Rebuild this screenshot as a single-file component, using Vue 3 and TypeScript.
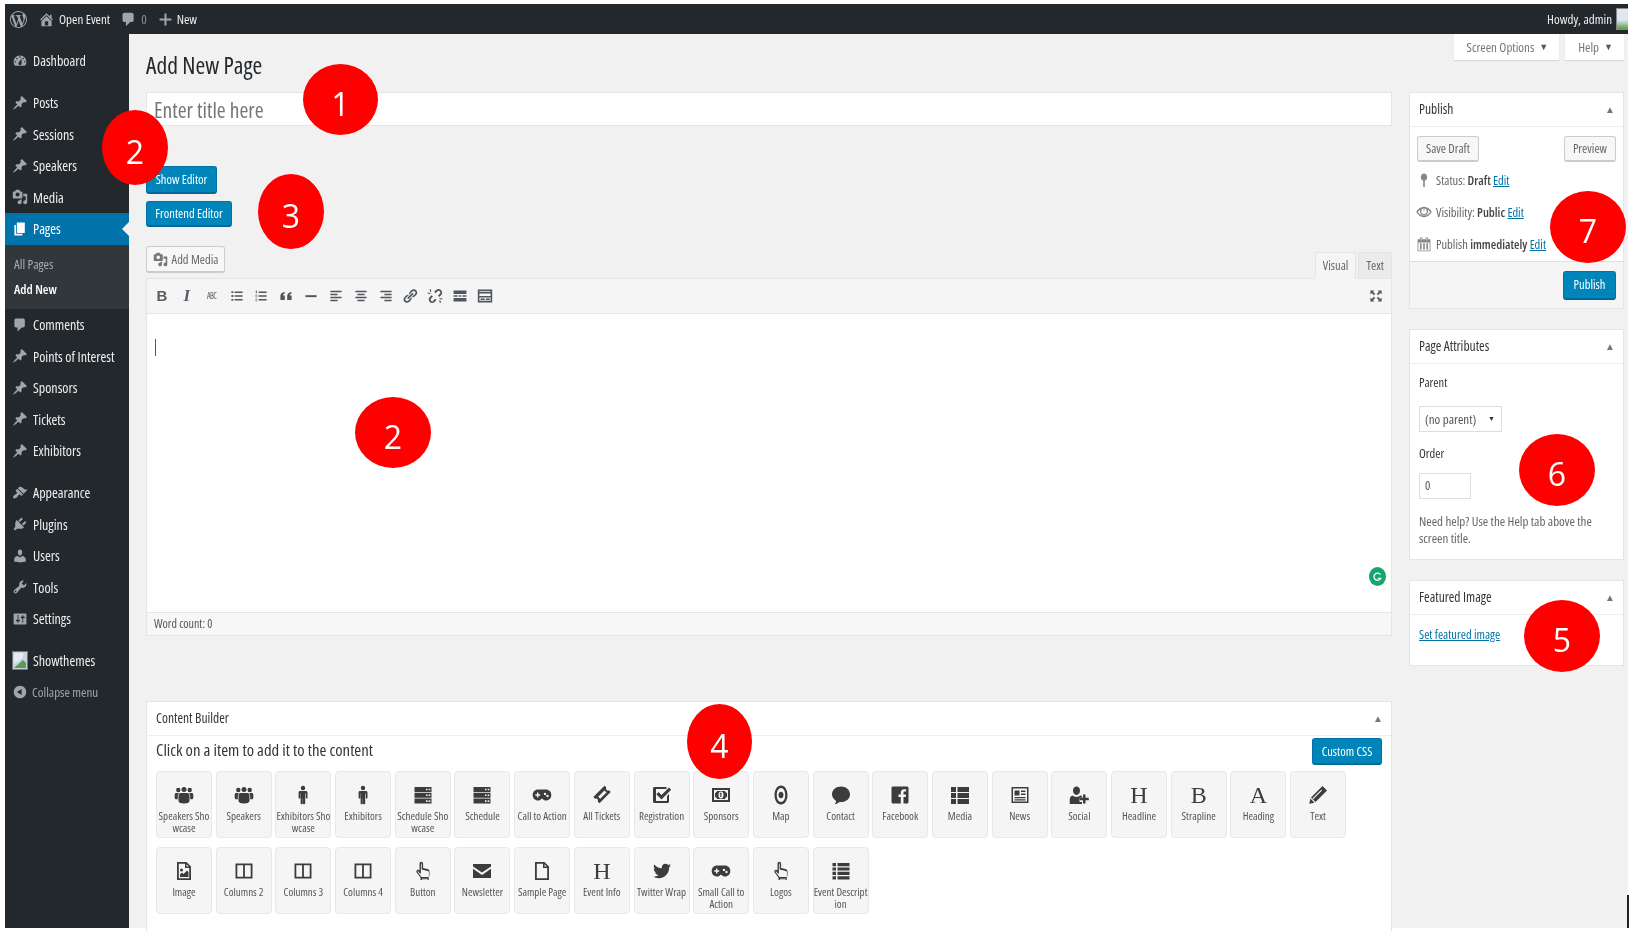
<script setup lang="ts">
type Item = { label: string; icon: string }

const icons: Record<string, string> = {
  dashboard: 'M3.76 16h12.48c1.1-1.37 1.76-3.11 1.76-5 0-4.42-3.58-8-8-8s-8 3.58-8 8c0 1.89.66 3.63 1.76 5zM10 4c.55 0 1 .45 1 1s-.45 1-1 1-1-.45-1-1 .45-1 1-1zM6 6c.55 0 1 .45 1 1s-.45 1-1 1-1-.45-1-1 .45-1 1-1zm8 0c.55 0 1 .45 1 1s-.45 1-1 1-1-.45-1-1 .45-1 1-1zm-5.37 5.55L12 7v6c0 1.1-.9 2-2 2s-2-.9-2-2c0-.57.24-1.08.63-1.45zM4 10c.55 0 1 .45 1 1s-.45 1-1 1-1-.45-1-1 .45-1 1-1zm12 0c.55 0 1 .45 1 1s-.45 1-1 1-1-.45-1-1 .45-1 1-1z',
  pin: 'M10.44 3.02l1.82-1.82 6.36 6.35-1.83 1.82c-1.05-.68-2.48-.57-3.41.36l-.75.75c-.92.93-1.04 2.35-.35 3.41l-1.83 1.82-2.41-2.41-2.8 2.79c-.42.42-3.38 2.71-3.8 2.29s1.86-3.39 2.28-3.81l2.79-2.79L4.1 9.36l1.83-1.82c1.05.69 2.48.57 3.4-.36l.75-.75c.93-.92 1.05-2.35.36-3.41z',
  media: 'M13 11V4c0-.55-.45-1-1-1h-1.67L9 1H5L3.67 3H2c-.55 0-1 .45-1 1v7c0 .55.45 1 1 1h10c.55 0 1-.45 1-1zM7 4.5c1.38 0 2.5 1.12 2.5 2.5S8.38 9.5 7 9.5 4.5 8.38 4.5 7 5.62 4.5 7 4.5zM14 6h5v10.5c0 1.38-1.12 2.5-2.5 2.5S14 17.88 14 16.5s1.12-2.5 2.5-2.5c.17 0 .34.02.5.05V9h-3V6zm-4 8.05V13h2v3.5c0 1.38-1.12 2.5-2.5 2.5S7 17.88 7 16.5 8.12 14 9.5 14c.17 0 .34.02.5.05z',
  pages: 'M6 15V2h10v13H6zm-1 1h8v2H3V5h2v11z',
  comment: 'M5 2h9c1.1 0 2 .9 2 2v7c0 1.1-.9 2-2 2h-2l-5 5v-5H5c-1.1 0-2-.9-2-2V4c0-1.1.9-2 2-2z',
  appearance: 'M14.48 11.06L7.41 3.99l1.5-1.5c.5-.56 2.3-.47 3.51.32 1.21.8 1.43 1.28 2.91 2.1 1.18.64 2.45 1.26 4.45.85zm-.71.71L6.7 4.7 4.93 6.47c-.39.39-.39 1.02 0 1.41l1.06 1.06c.39.39.39 1.03 0 1.42-.6.6-1.43 1.11-2.21 1.69-.35.26-.7.53-1.01.84C1.43 13.23.76 14.91 1.95 16.1c1.2 1.2 2.88.53 4.22-.81.31-.31.58-.66.85-1.02.57-.78 1.08-1.6 1.69-2.21.39-.39 1.02-.39 1.41 0l1.06 1.06c.39.39 1.02.39 1.41 0z',
  plugins: 'M13.11 4.36L9.87 7.6 8 5.73l3.24-3.24c.35-.34 1.05-.2 1.56.32.52.51.66 1.21.31 1.55zm-8 1.77l.91-1.12 9.01 9.01-1.19.84c-.71.71-2.63 1.16-3.82 1.16H6.14L4.9 17.26c-.59.59-1.54.59-2.12 0-.59-.58-.59-1.53 0-2.12l1.24-1.24v-3.88c0-1.13.4-3.19 1.09-3.89zm7.26 3.97l3.24-3.24c.34-.35 1.04-.21 1.55.31.52.51.66 1.21.31 1.55l-3.24 3.25z',
  users: 'M10 9.25c-2.27 0-2.73-3.44-2.73-3.44C7 4.02 7.82 2 9.97 2c2.16 0 2.98 2.02 2.71 3.81 0 0-.41 3.44-2.68 3.44zm0 2.57L12.72 10c2.39 0 4.52 2.33 4.52 4.53v2.49s-3.65 1.13-7.24 1.13c-3.65 0-7.24-1.13-7.24-1.13v-2.49c0-2.25 1.94-4.48 4.47-4.48z',
  tools: 'M16.68 9.77c-1.34 1.34-3.3 1.67-4.95.99l-5.41 6.52c-.99.99-2.59.99-3.58 0s-.99-2.59 0-3.57l6.52-5.42c-.68-1.65-.35-3.61.99-4.95 1.28-1.28 3.12-1.62 4.72-1.06l-2.89 2.89 2.82 2.82 2.86-2.87c.53 1.58.18 3.39-1.08 4.65zM3.81 16.21c.4.39 1.04.39 1.43 0 .4-.4.4-1.04 0-1.43-.39-.4-1.03-.4-1.43 0-.39.39-.39 1.03 0 1.43z',
  settings: 'M18 16V4c0-.55-.45-1-1-1H3c-.55 0-1 .45-1 1v12c0 .55.45 1 1 1h14c.55 0 1-.45 1-1zM8 11h1c.55 0 1 .45 1 1s-.45 1-1 1H8v1.5c0 .28-.22.5-.5.5s-.5-.22-.5-.5V13H6c-.55 0-1-.45-1-1s.45-1 1-1h1V5.5c0-.28.22-.5.5-.5s.5.22.5.5V11zm5-2h-1c-.55 0-1-.45-1-1s.45-1 1-1h1V5.5c0-.28.22-.5.5-.5s.5.22.5.5V7h1c.55 0 1 .45 1 1s-.45 1-1 1h-1v5.5c0 .28-.22.5-.5.5s-.5-.22-.5-.5V9z',
  collapse: 'M10 2.16c4.33 0 7.84 3.51 7.84 7.84s-3.51 7.84-7.84 7.84S2.16 14.33 2.16 10 5.71 2.16 10 2.16zm2 11.72V6.12L6.18 9.97z',
  home: 'M16 8.5l1.53 1.53-1.06 1.06L10 4.62l-6.47 6.47-1.06-1.06L10 2.5l4 4v-2h2v4zm-6-2.46l6 5.99V18H4v-5.97zM12 17v-5H8v5h4z',
  plus: 'M8.8 3h2.4v5.8H17v2.4h-5.8V17H8.8v-5.8H3V8.8h5.8z',
  wp: 'M20 10c0-5.51-4.49-10-10-10C4.48 0 0 4.49 0 10c0 5.52 4.48 10 10 10 5.51 0 10-4.48 10-10zM7.78 15.37L4.37 6.22c.55-.02 1.17-.08 1.17-.08.5-.06.44-1.13-.06-1.11 0 0-1.45.11-2.37.11-.18 0-.37 0-.58-.01C4.12 2.69 6.87 1.11 10 1.11c2.33 0 4.45.87 6.05 2.34-.68-.11-1.65.39-1.65 1.58 0 .74.45 1.36.9 2.1.35.61.55 1.36.55 2.46 0 1.49-1.4 5-1.4 5l-3.03-8.37c.54-.02.82-.17.82-.17.5-.05.44-1.25-.06-1.22 0 0-1.44.12-2.38.12-.87 0-2.33-.12-2.33-.12-.5-.03-.56 1.2-.06 1.22l.92.08 1.26 3.41zM17.41 10c.24-.64.74-1.87.43-4.25.7 1.29 1.05 2.71 1.05 4.25 0 3.29-1.73 6.24-4.4 7.78.97-2.59 1.94-5.2 2.92-7.78zM6.1 18.09C3.12 16.65 1.11 13.53 1.11 10c0-1.3.23-2.48.72-3.59C3.25 10.3 4.67 14.2 6.1 18.09zm4.03-6.63l2.58 6.98c-.86.29-1.76.45-2.71.45-.79 0-1.57-.11-2.29-.33.81-2.38 1.62-4.74 2.42-7.1z',
  status: 'M14 6.5c0 2-1.4 3.7-3 4.2V18l-1 1.5L9 18v-7.3c-1.6-.5-3-2.2-3-4.2C6 4 7.8 2 10 2s4 2 4 4.5z',
  eye: 'M10 3.5c4.2 0 7.6 2.7 9.7 6.5-2.1 3.8-5.5 6.5-9.7 6.5S2.4 13.800.3 10C2.4 6.200 5.8 3.5 10 3.5zM10 5.5a3.5 3.5 0 1 0 0 7 3.5 3.5 0 0 0 0-7zM10 6.5a1 1 0 1 1 0 2 1 1 0 0 1 0-2zM5.2 7.2C4 8 3 9 2.3 10c1.8 2.7 4.6 4.7 7.7 4.7s5.900-2 7.700-4.700c-.7-1-1.700-2-2.900-2.800.3.6.4 1.200.4 1.800a5.200 5.200 0 0 1-10.400 0c0-.6.1-1.200.4-1.800z',
  calendar: 'M15 4h3v15H2V4h3V3c0-.8.7-1.5 1.5-1.5S8 2.2 8 3v1h4V3c0-.8.7-1.5 1.5-1.5S15 2.2 15 3zM6.5 2.5c-.3 0-.5.2-.5.5v2c0 .3.2.5.5.5S7 5.3 7 5V3c0-.3-.2-.5-.5-.5zm7 0c-.3 0-.5.2-.5.5v2c0 .3.2.5.5.5s.5-.2.5-.5V3c0-.3-.2-.5-.5-.5zM17 18V8H3v10zM5 9h2v8H5zM9 9h2v8H9zM13 9h2v8h-2z',
  // editor toolbar
  bullist: 'M3 4h2.400v2.400H3zM7 4.300h10v1.800H7zM3 8.800h2.400v2.400H3zM7 9.100h10v1.800H7zM3 13.600h2.400V16H3zM7 13.900h10v1.800H7z',
  numlist: 'M3.500 3h1.200v3.500H3.500zM7 4.300h10v1.800H7zM3 8.500h2.200v1H3zM3 10.500h2.200v1H3zM7 9.100h10v1.800H7zM3 13.500h2.200v1H3zM3 15.500h2.200v1H3zM7 13.900h10v1.800H7z',
  quote: 'M8.500 5v2C7 7.500 6.300 8.500 6.300 9.500H8.500V15H3V10c0-3 2-4.700 5.500-5zM17 5v2c-1.500.5-2.200 1.500-2.200 2.500H17V15h-5.500V10c0-3 2-4.700 5.500-5z',
  hr: 'M3 9h14v2.400H3z',
  alignleft: 'M3 3.500h14v1.800H3zM3 7.200h9V9H3zM3 11h14v1.800H3zM3 14.700h9v1.800H3z',
  aligncenter: 'M3 3.500h14v1.800H3zM5.500 7.200h9V9h-9zM3 11h14v1.800H3zM5.500 14.700h9v1.800h-9z',
  alignright: 'M3 3.500h14v1.800H3zM8 7.200h9V9H8zM3 11h14v1.800H3zM8 14.700h9v1.800H8z',
  link: 'M17.740 2.760c1.680 1.690 1.680 4.410 0 6.100l-1.530 1.520c-1.120 1.120-2.700 1.490-4.130 1.130l2.620-2.620.76-.77.760-.76c.84-.84.840-2.200 0-3.040-.84-.850-2.200-.850-3.040 0l-.77.760-3.380 3.380c-.37-1.430 0-3.010 1.120-4.130l1.520-1.530c1.690-1.680 4.410-1.680 6.070-.04zM8.590 13.430l5.340-5.340c.42-.420.420-1.100 0-1.520-.44-.430-1.130-.390-1.520 0l-5.340 5.340c-.420.420-.420 1.100 0 1.520.44.430 1.130.390 1.520 0zm-.76 2.290l4.140-4.140c.38 1.430 0 3.020-1.120 4.140l-1.530 1.520c-1.680 1.680-4.410 1.680-6.090 0-1.680-1.680-1.680-4.410 0-6.090l1.530-1.530c1.120-1.120 2.710-1.500 4.140-1.120l-4.140 4.140c-.84.84-.84 2.200 0 3.040.84.840 2.200.840 3.040 0z',
  unlink: 'M17.740 2.760c1.680 1.690 1.680 4.410 0 6.100l-2.300 2.300-1.700-1.700 2.300-2.300c.84-.84.840-2.200 0-3.040-.84-.850-2.200-.850-3.040 0l-2.300 2.300-1.700-1.700 2.300-2.300c1.690-1.680 4.410-1.680 6.440.34zM7.830 15.720l2.300-2.300 1.700 1.700-2.300 2.300c-1.680 1.680-4.410 1.680-6.090 0-1.680-1.680-1.680-4.410 0-6.090l2.300-2.300 1.700 1.700-2.300 2.300c-.84.84-.84 2.200 0 3.040.84.840 2.200.840 2.690.350zM3.200 1.500l1.300-.3 1 3.300-1.300.4zM1 5.500l3.300.7-.3 1.300L.7 6.800zM15.200 15.500l1.300-.4 1 3.300-1.300.3zM15.800 12.500l3.500.7-.3 1.300-3.500-.7z',
  more: 'M2 3h16v4.500H2zM2 9.200h5v1.800H2zM8.500 9.200h3v1.800h-3zM13 9.200h5v1.800h-5zM2 12.500h16V17H2z',
  kitchen: 'M1 2h18v16H1zM3 4v1h14V4zM3 7v3h14V7zM3 12v4h14v-4zM4.500 13h5v2h-5zM11 13h5v2h-5z',
  expand: 'M3 3h5L6.300 4.700 9 7.400 7.400 9 4.700 6.300 3 8zM17 3v5l-1.700-1.700L12.600 9 11 7.400l2.700-2.700L12 3zM3 17v-5l1.700 1.700L7.400 11 9 12.600l-2.700 2.700L8 17zM17 17h-5l1.700-1.700L11 12.600l1.600-1.600 2.700 2.700L17 12z',
  // content builder tiles
  group: 'M10 2a2.500 2.500 0 1 1 0 5 2.500 2.500 0 0 1 0-5zM4.300 2.800a2.200 2.200 0 1 1 0 4.400 2.200 2.200 0 0 1 0-4.400zM15.700 2.800a2.200 2.200 0 1 1 0 4.400 2.200 2.200 0 0 1 0-4.400zM6.500 8h7c1.300 0 2 1 2 2.300V16c0 1.700-2.800 2.500-5.500 2.500S4.500 17.700 4.500 16v-5.700C4.500 9 5.200 8 6.500 8zM.7 9.500C.7 8.600 1.400 8 2.300 8H5c-.9.700-1.200 1.800-1.200 2.800v3.500H2.300C1.200 14.300.7 13.400.7 12.500zM19.300 9.500c0-.9-.7-1.500-1.600-1.500H15c.9.700 1.200 1.800 1.200 2.800v3.500h1.500c1.100 0 1.600-.9 1.600-1.800z',
  male: 'M10 .8a2.200 2.200 0 1 1 0 4.400 2.200 2.200 0 0 1 0-4.400zM7.200 6h5.600c1 0 1.700.7 1.700 1.700v5c0 .5-.4.9-.9.9s-.8-.4-.8-.9V8.500h-.6V18.200c0 .6-.5 1.100-1.100 1.100s-1.100-.5-1.100-1.100V13h-.2v5.200c0 .6-.5 1.100-1.100 1.100s-1.100-.5-1.100-1.100V8.500h-.3v4.200c0 .5-.4.9-.8.9s-.9-.4-.9-.9v-5C5.500 6.700 6.200 6 7.200 6z',
  server: 'M1.500 2h17v5h-17zM1.500 7.800h17v5h-17zM1.500 13.600h17v5h-17zM13 3.700v1.600h1.600V3.700zM15.700 3.700v1.600h1.600V3.700zM13 9.500v1.600h1.600V9.500zM15.700 9.500v1.600h1.600V9.500zM13 15.300v1.600h1.600v-1.600zM15.700 15.300v1.600h1.600v-1.600z',
  gamepad: 'M6 4.500h8c3 0 5.300 2.300 5.300 5.500s-2.300 5.500-5.300 5.500c-1.600 0-2.700-.8-3.500-1.800h-1C8.700 14.700 7.600 15.500 6 15.500c-3 0-5.300-2.300-5.300-5.500S3 4.500 6 4.500zM5 7.500v1.800H3.300v1.400H5v1.800h1.400v-1.800h1.800V9.300H6.400V7.500zM13 7.700a1.200 1.200 0 1 0 0 2.400 1.200 1.200 0 0 0 0-2.400zM15.500 9.800a1.200 1.200 0 1 0 0 2.400 1.200 1.200 0 0 0 0-2.400z',
  ticket: 'M12.500 .8l1.800 1.800c-.5.800-.3 1.700.3 2.300.6.600 1.500.8 2.300.3l1.800 1.800L7.500 18.200 5.700 16.400c.5-.8.3-1.700-.3-2.300-.6-.6-1.500-.8-2.300-.3L1.300 12zM12.500 5.500L6.200 11.800 8.200 13.800 14.500 7.500z',
  check: 'M3.500 2H14.500v2H4.500c-.3 0-.5.2-.5.5v11c0 .3.2.5.5.5h10c.3 0 .5-.2.5-.5V11l2-2v7.500c0 .8-.7 1.500-1.500 1.500h-13C1.700 18 1 17.300 1 16.500v-13C1 2.700 1.700 2 2.500 2zM17 2.500l2.200 2.200L9.500 14.500 4.300 9.300l2.200-2.200 3 3z',
  money: 'M1 3h18v14H1zM3 5v10h14V5zM6 6h8c.3 1.200 1 1.800 2 2v4c-1 .2-1.700.8-2 2H6c-.3-1.200-1-1.800-2-2V8c1-.2 1.700-.8 2-2zM10 6.500c-1.800 0-2.500 1.500-2.500 3.500s.7 3.500 2.500 3.500 2.500-1.500 2.500-3.500-.7-3.500-2.500-3.500zM9 7.800h1.500V12H9.300V9l-.6.400z',
  dot: 'M10 .5c3.800 0 6.500 4.200 6.500 9.500s-2.700 9.500-6.500 9.500S3.500 15.300 3.500 10 6.200.5 10 .5zM10 3c-2.600 0-4.200 3-4.200 7s1.600 7 4.200 7 4.200-3 4.200-7-1.600-7-4.200-7zM10 6.800c1.500 0 2.500 1.400 2.500 3.200s-1 3.200-2.500 3.200-2.500-1.400-2.500-3.200 1-3.200 2.500-3.200z',
  bubble: 'M10 1.500c5 0 9 3.200 9 7.800s-4 7.800-9 7.800c-.5 0-1 0-1.500-.1C7 18.200 5.500 19.200 3.500 19.200c1-.9 1.500-2 1.600-3.300C2.600 14.500 1 12 1 9.300 1 4.700 5 1.500 10 1.500z',
  facebook: 'M3 1.500h14c.8 0 1.500.7 1.500 1.500v14c0 .8-.7 1.500-1.500 1.500h-3.500v-6.500h2.200l.4-2.600h-2.600V7.800c0-.8.3-1.200 1.200-1.200h1.400V4.300c-.4-.1-1.200-.1-2-.1-2.200 0-3.300 1.300-3.300 3.500v1.700H8.500V12h2.300v6.500H3c-.8 0-1.500-.7-1.500-1.500V3c0-.8.7-1.500 1.500-1.500z',
  thlist: 'M1 2h5v5H1zM7.500 2h11.500v5H7.500zM1 8h5v5H1zM7.500 8h11.500v5H7.500zM1 14h5v5H1zM7.500 14h11.500v5H7.500z',
  news: 'M1.500 2h17v16h-17zM3 3.500v13h14v-13zM4.500 5.500h5v5h-5zM11 5.500h4.500v1.500H11zM11 8.500h4.500V10H11zM4.500 12h11v1.300h-11zM4.500 14.300h11v1.300h-11z',
  userplus: 'M7.500 1.500c2.200 0 3.500 1.800 3.500 4s-1.300 4.500-3.500 4.500S4 7.700 4 5.500s1.300-4 3.500-4zM3.500 10.500c1 .9 2.500 1.400 4 1.400s3-.5 4-1.400c.5.1 1 .3 1.500.6v1.900h-2.500v4H13V19H.7v-4.500c0-2 1.100-3.500 2.800-4zM14 9.500h2.500v3.300h3.300v2.400h-3.300v3.300H14v-3.300h-3.200v-2.400H14z',
  pencil: 'M14.500 1l4.500 4.500L7.500 17l-4.500-4.500zM2.300 13.500l4.200 4.200-5.200 1.100zM13.200 4.700l-8.700 8.700.8.800 8.700-8.700z',
  fileimage: 'M3 1H12.500L17 5.500V19H3zM4.800 2.800v14.400h10.400V7H11V2.800zM12.500 3.300V5.500h2.200zM7.500 7.500a1.500 1.500 0 1 1 0 3 1.500 1.500 0 0 1 0-3zM6 16v-2.500l2-2 1.500 1.500 3.500-3.500 1.500 1.500v5z',
  columns: 'M1.500 2.500h17v15h-17zM3.300 4.300v11.400h5.800V4.300zM10.900 4.300v11.400h5.800V4.300z',
  hand: 'M8.200.8c1.100 0 1.900.9 1.900 2v4.300l4.300 1c1.400.3 2.100 1.300 2.100 2.700v2.700c0 1-.3 1.900-.8 2.600v3H7.500v-2.500L3.800 11.700c-.8-1-.5-2.200.3-2.700.8-.6 1.900-.4 2.400.2V2.800c0-1.100.7-2 1.700-2zM8.200 2.500c-.2 0-.3.100-.3.300v9.700l-1.100-.1-1.500-2c-.2-.2-.5-.2-.7 0s-.2.4 0 .7l3.900 5h6.900c.3-.5.500-1.200.5-1.900v-2.700c0-.7-.3-1.200-1.100-1.400L8.700 8.600V2.800c0-.2-.3-.3-.5-.3zM8.900 17.800v1h5.800v-1z',
  envelope: 'M1 3h18v2.500L10 11.500 1 5.500zM1 7.800L10 14l9-6.200V17H1z',
  file: 'M3 1H12.500L17 5.500V19H3zM4.800 2.800v14.400h10.400V7H11V2.800zM12.500 3.300V5.500h2.200z',
  twitter: 'M18.940 4.460c-.49.73-1.110 1.380-1.830 1.900.01.15.01.31.01.47 0 4.850-3.690 10.440-10.430 10.440-2.070 0-4-.61-5.630-1.650.29.03.58.05.88.05 1.720 0 3.300-.59 4.550-1.570-1.600-.03-2.950-1.090-3.420-2.550.22.04.45.07.69.07.33 0 .66-.05.96-.13-1.670-.34-2.940-1.820-2.940-3.600v-.04c.5.27 1.060.44 1.660.46-.98-.66-1.630-1.780-1.630-3.060 0-.67.18-1.300.5-1.840 1.810 2.220 4.510 3.680 7.560 3.830-.06-.27-.1-.55-.1-.84 0-2.020 1.650-3.660 3.670-3.660 1.060 0 2.010.44 2.680 1.160.83-.17 1.620-.47 2.330-.89-.28.85-.86 1.570-1.620 2.020.75-.08 1.450-.28 2.110-.57z',
  list: 'M1.500 2h3.500v3.200H1.500zM6.500 2h12v3.200h-12zM1.500 6.400h3.500v3.200H1.500zM6.500 6.400h12v3.200h-12zM1.500 10.800h3.500V14H1.500zM6.500 10.800h12V14h-12zM1.500 15.200h3.500v3.200H1.500zM6.500 15.200h12v3.200h-12z',
}

const menuGroups: Item[][] = [
  [{ label: 'Dashboard', icon: 'dashboard' }],
  [
    { label: 'Posts', icon: 'pin' },
    { label: 'Sessions', icon: 'pin' },
    { label: 'Speakers', icon: 'pin' },
    { label: 'Media', icon: 'media' },
    { label: 'Pages', icon: 'pages' },
    { label: 'Comments', icon: 'comment' },
    { label: 'Points of Interest', icon: 'pin' },
    { label: 'Sponsors', icon: 'pin' },
    { label: 'Tickets', icon: 'pin' },
    { label: 'Exhibitors', icon: 'pin' },
  ],
  [
    { label: 'Appearance', icon: 'appearance' },
    { label: 'Plugins', icon: 'plugins' },
    { label: 'Users', icon: 'users' },
    { label: 'Tools', icon: 'tools' },
    { label: 'Settings', icon: 'settings' },
  ],
  [
    { label: 'Showthemes', icon: 'theme' },
    { label: 'Collapse menu', icon: 'collapse' },
  ],
]

const toolbar = ['bullist', 'numlist', 'quote', 'hr', 'alignleft', 'aligncenter', 'alignright', 'link', 'unlink', 'more', 'kitchen']

// glyph tiles (H, B, A) are serif letters in the original icon font
const tiles: { label: string; icon?: string; glyph?: string }[] = [
  { label: 'Speakers Sho\nwcase', icon: 'group' },
  { label: 'Speakers', icon: 'group' },
  { label: 'Exhibitors Sho\nwcase', icon: 'male' },
  { label: 'Exhibitors', icon: 'male' },
  { label: 'Schedule Sho\nwcase', icon: 'server' },
  { label: 'Schedule', icon: 'server' },
  { label: 'Call to Action', icon: 'gamepad' },
  { label: 'All Tickets', icon: 'ticket' },
  { label: 'Registration', icon: 'check' },
  { label: 'Sponsors', icon: 'money' },
  { label: 'Map', icon: 'dot' },
  { label: 'Contact', icon: 'bubble' },
  { label: 'Facebook', icon: 'facebook' },
  { label: 'Media', icon: 'thlist' },
  { label: 'News', icon: 'news' },
  { label: 'Social', icon: 'userplus' },
  { label: 'Headline', glyph: 'H' },
  { label: 'Strapline', glyph: 'B' },
  { label: 'Heading', glyph: 'A' },
  { label: 'Text', icon: 'pencil' },
  { label: 'Image', icon: 'fileimage' },
  { label: 'Columns 2', icon: 'columns' },
  { label: 'Columns 3', icon: 'columns' },
  { label: 'Columns 4', icon: 'columns' },
  { label: 'Button', icon: 'hand' },
  { label: 'Newsletter', icon: 'envelope' },
  { label: 'Sample Page', icon: 'file' },
  { label: 'Event Info', glyph: 'H' },
  { label: 'Twitter Wrap', icon: 'twitter' },
  { label: 'Small Call to\nAction', icon: 'gamepad' },
  { label: 'Logos', icon: 'hand' },
  { label: 'Event Descript\nion', icon: 'list' },
]

const markers = [
  { n: 1, x: 303, y: 64, w: 75, h: 71 },
  { n: 2, x: 102, y: 110, w: 66, h: 75 },
  { n: 3, x: 258, y: 174, w: 66, h: 75 },
  { n: 2, x: 355, y: 397, w: 76, h: 71 },
  { n: 4, x: 687, y: 704, w: 65, h: 75 },
  { n: 5, x: 1524, y: 600, w: 76, h: 72 },
  { n: 6, x: 1519, y: 434, w: 76, h: 72 },
  { n: 7, x: 1550, y: 191, w: 76, h: 72 },
]
</script>

<template>
  <div class="shot">
    <header class="topbar">
      <svg class="wp-logo" viewBox="0 0 20 20"><path :d="icons.wp" fill-rule="evenodd" /></svg>
      <svg class="bar-icon" viewBox="0 0 20 20"><path :d="icons.home" fill-rule="evenodd" /></svg>
      <span class="bar-text">Open Event</span>
      <svg class="bar-icon comment-icon" viewBox="0 0 20 20"><path :d="icons.comment" /></svg>
      <span class="bar-count">0</span>
      <svg class="bar-icon plus-icon" viewBox="0 0 20 20"><path :d="icons.plus" /></svg>
      <span class="bar-text">New</span>
      <span class="howdy">Howdy, admin</span>
      <span class="avatar"></span>
    </header>

    <div class="admin">
      <nav class="sidebar">
        <ul v-for="(group, g) in menuGroups" :key="g" class="menu-group">
          <template v-for="item in group" :key="item.label">
            <li
              class="menu-item"
              :class="{ current: item.label === 'Pages', collapse: item.icon === 'collapse' }"
            >
              <svg v-if="item.icon === 'theme'" class="theme-thumb" viewBox="0 0 16 19">
                <rect x="0.5" y="0.5" width="15" height="18" fill="#c9d3de" stroke="#777" />
                <path d="M2 17l9-8 3 3v5z" fill="#5f9a55" />
                <path d="M2 2h9v5l-9 6z" fill="#e4eaf1" />
              </svg>
              <svg v-else class="menu-icon" viewBox="0 0 20 20">
                <path :d="icons[item.icon]" fill-rule="evenodd" />
              </svg>
              <span>{{ item.label }}</span>
            </li>
            <li v-if="item.label === 'Pages'" class="submenu">
              <span class="sub-link">All Pages</span>
              <span class="sub-link active">Add New</span>
            </li>
          </template>
        </ul>
      </nav>

      <main class="content">
        <div class="screen-links">
          <span class="screen-tab">Screen Options <i class="caret">▼</i></span>
          <span class="screen-tab">Help <i class="caret">▼</i></span>
        </div>
        <h1 class="page-title">Add New Page</h1>

        <div class="columns">
          <div class="col-main">
            <div class="title-input">Enter title here</div>
            <div class="mode-buttons">
              <button class="btn-primary show-btn">Show Editor</button>
              <button class="btn-primary frontend-btn">Frontend Editor</button>
            </div>

            <div class="media-row">
              <button class="btn-plain add-media">
                <svg viewBox="0 0 20 20"><path :d="icons.media" fill-rule="evenodd" /></svg>
                Add Media
              </button>
              <div class="editor-tabs">
                <span class="editor-tab active">Visual</span>
                <span class="editor-tab">Text</span>
              </div>
            </div>

            <section class="editor">
              <div class="toolbar">
                <span class="tb-btn tb-letter">B</span>
                <span class="tb-btn tb-letter tb-italic">I</span>
                <span class="tb-btn tb-abc">ABC</span>
                <svg v-for="name in toolbar" :key="name" class="tb-btn" viewBox="0 0 20 20">
                  <path :d="icons[name]" fill-rule="evenodd" />
                </svg>
                <svg class="tb-btn tb-expand" viewBox="0 0 20 20"><path :d="icons.expand" /></svg>
              </div>
              <div class="editor-body">
                <span class="cursor"></span>
                <span class="grammarly">
                  <svg viewBox="0 0 20 20"><path d="M14.5 7A5.5 5.5 0 1 0 15 13H10.500" fill="none" stroke="#fff" stroke-width="2" /></svg>
                </span>
              </div>
              <div class="status-bar">Word count: 0</div>
            </section>

            <section class="builder">
              <div class="box-head">
                <span>Content Builder</span>
                <i class="fold">▲</i>
              </div>
              <div class="builder-intro">
                <span class="intro-text">Click on a item to add it to the content</span>
                <button class="btn-primary css-btn">Custom CSS</button>
              </div>
              <div class="tile-grid">
                <div v-for="tile in tiles" :key="tile.label" class="tile">
                  <span v-if="tile.glyph" class="tile-glyph">{{ tile.glyph }}</span>
                  <svg v-else class="tile-icon" viewBox="0 0 20 20">
                    <path :d="icons[tile.icon!]" fill-rule="evenodd" />
                  </svg>
                  <span class="tile-label">{{ tile.label }}</span>
                </div>
              </div>
            </section>
          </div>

          <aside class="col-side">
            <section class="box publish">
              <div class="box-head"><span>Publish</span><i class="fold">▲</i></div>
              <div class="publish-actions">
                <button class="btn-plain">Save Draft</button>
                <button class="btn-plain">Preview</button>
              </div>
              <div class="pub-row">
                <svg viewBox="0 0 20 20"><path :d="icons.status" /></svg>
                <span>Status: <b>Draft</b> <a>Edit</a></span>
              </div>
              <div class="pub-row">
                <svg viewBox="0 0 20 20"><path :d="icons.eye" fill-rule="evenodd" /></svg>
                <span>Visibility: <b>Public</b> <a>Edit</a></span>
              </div>
              <div class="pub-row">
                <svg viewBox="0 0 20 20"><path :d="icons.calendar" fill-rule="evenodd" /></svg>
                <span>Publish <b>immediately</b> <a>Edit</a></span>
              </div>
              <div class="pub-foot">
                <button class="btn-primary pub-btn">Publish</button>
              </div>
            </section>

            <section class="box attributes">
              <div class="box-head"><span>Page Attributes</span><i class="fold">▲</i></div>
              <div class="attr-body">
                <p class="attr-label">Parent</p>
                <div class="fake-select">(no parent) <i class="select-caret">▼</i></div>
                <p class="attr-label">Order</p>
                <div class="fake-input">0</div>
                <p class="attr-help">Need help? Use the Help tab above the screen title.</p>
              </div>
            </section>

            <section class="box featured">
              <div class="box-head"><span>Featured Image</span><i class="fold">▲</i></div>
              <div class="feat-body"><a>Set featured image</a></div>
            </section>
          </aside>
        </div>
      </main>
    </div>

    <span class="cut-mark"></span>

    <div
      v-for="(m, i) in markers"
      :key="i"
      class="marker"
      :style="{ left: m.x + 'px', top: m.y + 'px', width: m.w + 'px', height: m.h + 'px' }"
    >
      {{ m.n }}
    </div>
  </div>
</template>

<style scoped>
.shot {
  position: relative;
  width: 1632px;
  height: 931px;
  overflow: hidden;
  background: #fff;
  font-family: "Open Sans", "Noto Sans", sans-serif;
  font-stretch: 75%;
  font-size: 14px;
  color: #444;
  padding: 4px 4px 3px 5px;
  box-sizing: border-box;
  display: flex;
  flex-direction: column;
  filter: blur(0.4px);
}

button {
  font: inherit;
  font-stretch: 75%;
  cursor: pointer;
}

ul, p, h1 {
  margin: 0;
  padding: 0;
  list-style: none;
}

/* top bar */
.topbar {
  display: flex;
  align-items: center;
  height: 30px;
  flex: none;
  background: #23282d;
  color: #eee;
  font-size: 13px;
  padding-left: 5px;
}

.wp-logo {
  width: 17px;
  height: 17px;
  fill: #a0a5aa;
  margin-right: 11px;
}

.bar-icon {
  width: 17px;
  height: 17px;
  fill: #a0a5aa;
  margin-right: 4px;
}

.comment-icon {
  margin-left: 10px;
  margin-right: 4px;
}

.bar-count {
  color: #8a8f94;
}

.plus-icon {
  margin-left: 10px;
  margin-right: 3px;
}

.howdy {
  margin-left: auto;
  margin-right: 4px;
}

.avatar {
  width: 11px;
  height: 20px;
  border: 1px solid #888;
  border-right: 0;
  background: linear-gradient(#dfe6ef 55%, #5a9a4a);
}

/* sidebar */
.admin {
  flex: 1;
  display: flex;
  min-height: 0;
}

.sidebar {
  width: 124px;
  flex: none;
  background: #23282d;
  color: #eee;
  padding-top: 11px;
}

.menu-group {
  margin-bottom: 10.5px;
}

.menu-item {
  position: relative;
  display: flex;
  align-items: center;
  height: 31.5px;
  padding-left: 7px;
}

.menu-icon {
  width: 16px;
  height: 16px;
  fill: #a0a5aa;
  margin-right: 5px;
  flex: none;
}

.theme-thumb {
  width: 16px;
  height: 19px;
  margin-right: 5px;
  flex: none;
}

.menu-item.current {
  background: #0073aa;
  color: #fff;
}

.menu-item.current .menu-icon {
  fill: #fff;
}

.menu-item.current::after {
  content: "";
  position: absolute;
  right: 0;
  top: 9px;
  border: 7px solid transparent;
  border-right-color: #f1f1f1;
  border-left: 0;
}

.menu-item.collapse {
  color: #a0a5aa;
  font-size: 13px;
}

.menu-item.collapse .menu-icon {
  margin-right: 4px;
}

.submenu {
  display: flex;
  flex-direction: column;
  height: 64.5px;
  padding: 7px 0 0 9px;
  background: #32373c;
  box-sizing: border-box;
  font-size: 13px;
  color: #a9adb2;
}

.sub-link {
  height: 25px;
  line-height: 25px;
}

.sub-link.active {
  color: #fff;
  font-weight: 600;
}

/* main area */
.content {
  flex: 1;
  min-width: 0;
  background: #f1f1f1;
  padding: 0 4px 0 17px;
}

.screen-links {
  display: flex;
  justify-content: flex-end;
  gap: 6px;
  height: 26px;
}

.screen-tab {
  display: flex;
  align-items: center;
  gap: 5px;
  padding: 0 11px 0 13px;
  background: #fff;
  color: #72777c;
  font-size: 13px;
  box-shadow: 0 1px 1px rgba(0, 0, 0, 0.1);
}

.caret {
  font-style: normal;
  font-size: 9px;
  color: #555;
  position: relative;
  top: -1px;
}

.page-title {
  font-size: 23.5px;
  font-weight: 400;
  line-height: 28px;
  color: #23282d;
  margin-top: -9px;
  height: 41px;
}

.columns {
  display: flex;
  gap: 17px;
  align-items: flex-start;
}

.col-main {
  width: 1246px;
  flex: none;
}

.col-side {
  width: 215px;
  flex: none;
}

.title-input {
  height: 34px;
  background: #fff;
  border: 1px solid #e5e5e5;
  box-sizing: border-box;
  padding-left: 7px;
  font-size: 21.5px;
  line-height: 34px;
  color: #72777c;
}

.mode-buttons {
  display: flex;
  flex-direction: column;
  align-items: flex-start;
  gap: 7px;
  margin-top: 40px;
}

.btn-primary {
  background: #0085ba;
  border: 1px solid #0073aa;
  border-bottom: 2px solid #006799;
  border-radius: 3px;
  color: #fff;
  font-size: 12.5px;
  padding: 0;
}

.show-btn {
  width: 71px;
  height: 28px;
}

.frontend-btn {
  width: 86px;
  height: 26px;
}

.btn-plain {
  display: inline-flex;
  align-items: center;
  justify-content: center;
  background: #f7f7f7;
  border: 1px solid #ccc;
  border-bottom-width: 2px;
  border-radius: 3px;
  color: #666;
  font-size: 12.5px;
  height: 26px;
  padding: 0 8px;
}

.media-row {
  display: flex;
  justify-content: space-between;
  align-items: flex-end;
  height: 32px;
  margin-top: 19px;
}

.add-media {
  align-self: flex-start;
  width: 79px;
  height: 27px;
  padding: 0;
  gap: 4px;
}

.add-media svg {
  width: 15px;
  height: 15px;
  fill: #777;
}

.editor-tabs {
  display: flex;
  gap: 2px;
  position: relative;
  top: 1px;
}

.editor-tab {
  height: 25px;
  line-height: 25px;
  padding: 0 7px;
  background: #ebebeb;
  border: 1px solid #e5e5e5;
  color: #666;
  font-size: 12.5px;
}

.editor-tab.active {
  background: #f5f5f5;
  border-bottom-color: #f5f5f5;
}

.editor {
  border: 1px solid #e5e5e5;
  background: #fff;
}

.toolbar {
  display: flex;
  align-items: center;
  height: 34px;
  background: #f5f5f5;
  border-bottom: 1px solid #e5e5e5;
  padding-left: 7px;
}

.tb-btn {
  width: 16px;
  height: 16px;
  margin-right: 8.85px;
  fill: #4f565d;
  flex: none;
  text-align: center;
}

.tb-letter {
  font-family: "Liberation Sans", sans-serif;
  font-weight: 700;
  font-size: 15px;
  line-height: 16px;
  color: #555d66;
}

.tb-italic {
  font-family: "Liberation Serif", serif;
  font-style: italic;
  font-size: 17px;
}

.tb-abc {
  font-size: 8px;
  line-height: 16px;
  color: #555d66;
  letter-spacing: -0.5px;
}

.tb-expand {
  margin-left: auto;
  margin-right: 7px;
}

.editor-body {
  position: relative;
  height: 298px;
  padding: 25px 0 0 8px;
  box-sizing: border-box;
}

.cursor {
  display: block;
  width: 1px;
  height: 17px;
  background: #555;
}

.grammarly {
  position: absolute;
  right: 5px;
  bottom: 26px;
  width: 17px;
  height: 19px;
  border-radius: 50%;
  background: #15a66e;
  display: flex;
  align-items: center;
  justify-content: center;
}

.grammarly svg {
  width: 13px;
  height: 13px;
}

.status-bar {
  height: 22px;
  line-height: 22px;
  padding-left: 7px;
  background: #f7f7f7;
  border-top: 1px solid #e5e5e5;
  font-size: 12px;
  color: #555;
}

/* boxes */
.box,
.builder {
  background: #fff;
  border: 1px solid #e5e5e5;
  box-sizing: border-box;
}

.box + .box {
  margin-top: 20px;
}

.box-head {
  display: flex;
  justify-content: space-between;
  align-items: center;
  height: 34px;
  padding: 0 8px 2px 9px;
  box-sizing: border-box;
  border-bottom: 1px solid #eee;
  font-weight: 500;
  color: #32373c;
  font-size: 13.5px;
}

.fold {
  font-style: normal;
  font-size: 10px;
  color: #72777c;
}

.builder {
  margin-top: 65px;
  height: 240px;
}

.builder-intro {
  display: flex;
  justify-content: space-between;
  padding: 2px 9px 0;
  height: 35px;
  box-sizing: border-box;
}

.intro-text {
  font-size: 16.7px;
  font-weight: 500;
  color: #32373c;
}

.css-btn {
  width: 70px;
  height: 27px;
  flex: none;
}

.tile-grid {
  display: grid;
  grid-template-columns: repeat(20, 56px);
  column-gap: 3.7px;
  row-gap: 9px;
  padding-left: 9px;
}

.tile {
  height: 67px;
  background: #f5f5f5;
  border: 1px solid #e8e8e8;
  border-radius: 4px;
  box-sizing: border-box;
  display: flex;
  flex-direction: column;
  align-items: center;
  padding-top: 13px;
  overflow: hidden;
}

.tile-icon {
  width: 20px;
  height: 20px;
  fill: #3c3c3c;
  flex: none;
}

.tile-glyph {
  font-family: "Liberation Serif", serif;
  font-stretch: 100%;
  font-size: 24px;
  line-height: 20px;
  height: 20px;
  color: #3c3c3c;
}

.tile-label {
  margin-top: 5px;
  font-size: 11px;
  line-height: 12px;
  color: #555;
  text-align: center;
  white-space: pre;
}

/* publish */
.publish {
  height: 217px;
  position: relative;
}

.publish-actions {
  display: flex;
  justify-content: space-between;
  padding: 9px 7px 0;
}

.pub-row {
  display: flex;
  align-items: center;
  gap: 4px;
  height: 32px;
  padding-left: 6px;
  font-size: 12.5px;
  color: #666;
}

.publish-actions + .pub-row {
  margin-top: 2px;
}

.pub-row svg {
  width: 16px;
  height: 16px;
  fill: #82878c;
  flex: none;
}

.pub-row b {
  font-weight: 600;
  color: #444;
}

a {
  color: #0073aa;
  text-decoration: underline;
}

.pub-foot {
  position: absolute;
  left: 0;
  right: 0;
  bottom: 0;
  height: 47px;
  background: #f5f5f5;
  border-top: 1px solid #ddd;
  display: flex;
  justify-content: flex-end;
  align-items: center;
  padding-right: 7px;
  box-sizing: border-box;
}

.pub-btn {
  width: 53px;
  height: 29px;
}

.attributes {
  height: 231px;
}

.attr-body {
  padding: 10px 9px 0;
}

.attr-label {
  font-size: 12.5px;
  line-height: 18px;
  color: #32373c;
}

.fake-select {
  width: 83px;
  height: 26px;
  border: 1px solid #ddd;
  margin: 14px 0 13px;
  line-height: 24px;
  padding-left: 5px;
  font-size: 13px;
  color: #555;
  box-sizing: border-box;
  position: relative;
}

.select-caret {
  position: absolute;
  right: 6px;
  top: 0;
  font-style: normal;
  font-size: 7px;
  color: #333;
}

.fake-input {
  width: 52px;
  height: 26px;
  border: 1px solid #ddd;
  margin-top: 10px;
  line-height: 24px;
  padding-left: 5px;
  font-size: 12.5px;
  color: #555;
  box-sizing: border-box;
}

.attr-help {
  margin-top: 14px;
  font-size: 13px;
  line-height: 17px;
  color: #666;
}

.featured {
  height: 86px;
}

.feat-body {
  padding: 11px 9px;
  font-size: 12.5px;
}

.cut-mark {
  position: absolute;
  left: 1627px;
  top: 895px;
  width: 2px;
  height: 33px;
  background: #222;
}

/* numbered callouts laid over the screenshot */
.marker {
  position: absolute;
  border-radius: 50%;
  background: #fe0000;
  color: #fff;
  font-family: "Open Sans", sans-serif;
  font-stretch: 100%;
  font-size: 32px;
  display: flex;
  align-items: center;
  justify-content: center;
  padding-top: 7px;
  box-sizing: border-box;
}
</style>
